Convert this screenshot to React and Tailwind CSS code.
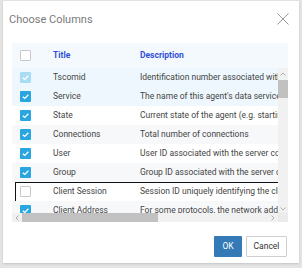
import React from "react";

const rows = [
  { t: "Tscomid", d: "Identification number associated with the agent", c: "disabled", bg: "bg-[#eef7fd]" },
  { t: "Service", d: "The name of this agent's data service", c: "on", bg: "bg-[#eef7fd]" },
  { t: "State", d: "Current state of the agent (e.g. starting)", c: "on", bg: "bg-white" },
  { t: "Connections", d: "Total number of connections", c: "on", bg: "bg-[#f7f8fa]" },
  { t: "User", d: "User ID associated with the server connection", c: "on", bg: "bg-white" },
  { t: "Group", d: "Group ID associated with the server connection", c: "on", bg: "bg-[#f7f8fa]" },
  { t: "Client Session", d: "Session ID uniquely identifying the client", c: "off", bg: "bg-white", focus: true },
  { t: "Client Address", d: "For some protocols, the network address", c: "on", bg: "bg-[#f7f8fa]" },
];

function Check({ state }) {
  if (state === "off") {
    return <div className="w-[11px] h-[11px] border border-[#c8c8c8] bg-white rounded-[1px]" />;
  }
  const bg = state === "disabled" ? "bg-[#a9dcf3]" : "bg-[#29a6e0]";
  return (
    <div className={`w-[11px] h-[11px] ${bg} rounded-[1px] flex items-center justify-center`}>
      <svg width="9" height="9" viewBox="0 0 10 10">
        <path d="M2 5.2 L4.2 7.2 L8.2 3" fill="none" stroke="white" strokeWidth="1.4" />
      </svg>
    </div>
  );
}

export default function App() {
  return (
    <div className="w-[302px] h-[268px] bg-[#e4e4e4] pt-[1px] pl-[3px]" style={{ fontFamily: "Roboto, 'Liberation Sans', sans-serif" }}>
      <div className="w-[296px] h-[262px] bg-white flex flex-col shadow-[0_1px_2px_rgba(0,0,0,0.15)]">
        <div className="h-[42px] flex items-start justify-between pl-[6px] pr-[10px] pt-[12px]">
          <div className="text-[11px] text-[#7a7a7a] leading-[13px]">Choose Columns</div>
          <svg width="12" height="12" viewBox="0 0 12 12" className="mt-[0px]">
            <path d="M0.5 0.5 L11.5 11.5 M11.5 0.5 L0.5 11.5" stroke="#9a9a9a" strokeWidth="1" />
          </svg>
        </div>
        <div className="ml-[9px] w-[276px] flex flex-col">
          <div className="h-[25px] bg-[#f4f9fd] flex items-center text-[8.5px] font-bold text-[#3050d8]">
            <div className="w-[41px] pl-[8px] flex items-center">
              <Check state="off" />
            </div>
            <div className="w-[87px]">Title</div>
            <div>Description</div>
          </div>
          <div className="flex h-[145px]">
            <div className="w-[266px] overflow-hidden">
              {rows.map((r) => (
                <div key={r.t} className={`relative h-[19px] ${r.bg} flex items-center text-[8.5px] text-[#454545] whitespace-nowrap`}>
                  {r.focus && <div className="absolute left-[3px] right-[-1px] top-0 bottom-[-1px] border border-[#111]" />}
                  <div className="w-[41px] pl-[8px] flex items-center shrink-0">
                    <Check state={r.c} />
                  </div>
                  <div className="w-[87px] shrink-0">{r.t}</div>
                  <div className="shrink-0">{r.d}</div>
                </div>
              ))}
            </div>
            <div className="w-[10px] bg-[#f1f1f1] flex flex-col items-center">
              <div className="h-[12px] flex items-center justify-center">
                <svg width="6" height="4" viewBox="0 0 6 4"><path d="M0.5 3.5 L3 1 L5.5 3.5" fill="none" stroke="#a0a0a0" strokeWidth="0.8" /></svg>
              </div>
              <div className="w-[10px] h-[18px] bg-[#c1c1c1]" />
              <div className="flex-1" />
              <div className="h-[8px] flex items-center justify-center">
                <svg width="6" height="4" viewBox="0 0 6 4"><path d="M0.5 0.5 L3 3 L5.5 0.5" fill="none" stroke="#a0a0a0" strokeWidth="0.8" /></svg>
              </div>
            </div>
          </div>
          <div className="h-[9px] flex bg-[#f1f1f1]">
            <div className="w-[10px] flex items-center justify-center">
              <svg width="4" height="6" viewBox="0 0 4 6"><path d="M3.5 0.5 L1 3 L3.5 5.5" fill="none" stroke="#a0a0a0" strokeWidth="0.8" /></svg>
            </div>
            <div className="w-[136px] bg-[#c1c1c1]" />
            <div className="flex-1" />
            <div className="w-[10px] flex items-center justify-center">
              <svg width="4" height="6" viewBox="0 0 4 6"><path d="M0.5 0.5 L3 3 L0.5 5.5" fill="none" stroke="#a0a0a0" strokeWidth="0.8" /></svg>
            </div>
            <div className="w-[10px] bg-[#ebebeb]" />
          </div>
        </div>
        <div className="flex justify-end gap-[4px] pr-[12px] mt-[14px]">
          <button className="w-[28px] h-[21px] bg-[#337ab7] text-white text-[8.5px] rounded-[1px]">OK</button>
          <button className="w-[41px] h-[21px] bg-white border border-[#cfcfcf] text-[#333] text-[8.5px] rounded-[1px]">Cancel</button>
        </div>
      </div>
    </div>
  );
}
